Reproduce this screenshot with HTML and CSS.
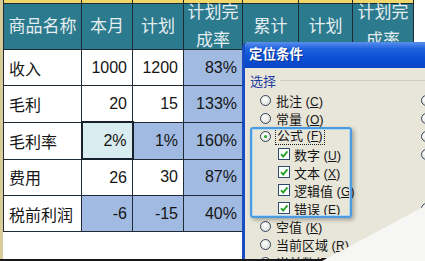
FILE: index.html
```html
<!DOCTYPE html>
<html lang="zh-CN">
<head>
    <meta charset="UTF-8">
    <meta name="viewport" content="width=device-width, initial-scale=1.0">
    <title>定位条件</title>
    <link rel="stylesheet" href="styles.css">
</head>
<body>
    <div class="sheet">
        <table class="grid">
            <colgroup>
                <col class="c-name">
                <col class="c-num">
                <col class="c-num">
                <col class="c-rate">
                <col class="c-sum">
                <col class="c-plan">
                <col class="c-rate2">
            </colgroup>
            <tr class="cap">
                <td></td><td></td><td></td><td></td><td></td><td></td><td></td>
            </tr>
            <tr class="head">
                <th><div class="hd">商品名称</div></th>
                <th><div class="hd">本月</div></th>
                <th><div class="hd">计划</div></th>
                <th><div class="hd two">计划完<br>成率</div></th>
                <th><div class="hd">累计</div></th>
                <th><div class="hd">计划</div></th>
                <th><div class="hd two">计划完<br>成率</div></th>
            </tr>
            <tr>
                <td>收入</td><td class="n">1000</td><td class="n">1200</td><td class="n hl">83%</td>
                <td class="n">5200</td><td class="n">6000</td><td class="n hl">87%</td>
            </tr>
            <tr>
                <td>毛利</td><td class="n">20</td><td class="n">15</td><td class="n hl">133%</td>
                <td class="n">104</td><td class="n">90</td><td class="n hl">116%</td>
            </tr>
            <tr>
                <td>毛利率</td><td class="n sel">2%</td><td class="n hl">1%</td><td class="n hl">160%</td>
                <td class="n hl">2%</td><td class="n hl">2%</td><td class="n hl">133%</td>
            </tr>
            <tr>
                <td>费用</td><td class="n">26</td><td class="n">30</td><td class="n hl">87%</td>
                <td class="n">130</td><td class="n">150</td><td class="n hl">87%</td>
            </tr>
            <tr>
                <td>税前利润</td><td class="n hl">-6</td><td class="n hl">-15</td><td class="n hl">40%</td>
                <td class="n hl">-26</td><td class="n hl">-60</td><td class="n hl">43%</td>
            </tr>
        </table>

        <div class="dialog">
            <div class="title">定位条件</div>
            <div class="group"><span>选择</span><i class="rule"></i></div>
            <div class="cols">
                <div class="col">
                    <label class="opt"><span class="radio"></span><span>批注 (<u>C</u>)</span></label>
                    <label class="opt"><span class="radio"></span><span>常量 (<u>O</u>)</span></label>
                    <label class="opt"><span class="radio on"></span><span class="focus">公式 (<u>F</u>)</span></label>
                    <label class="opt sub"><span class="check"><svg viewBox="0 0 10 10"><path d="M2 5.2 L4.2 7.6 L8.4 2.4"/></svg></span><span>数字 (<u>U</u>)</span></label>
                    <label class="opt sub"><span class="check"><svg viewBox="0 0 10 10"><path d="M2 5.2 L4.2 7.6 L8.4 2.4"/></svg></span><span>文本 (<u>X</u>)</span></label>
                    <label class="opt sub"><span class="check"><svg viewBox="0 0 10 10"><path d="M2 5.2 L4.2 7.6 L8.4 2.4"/></svg></span><span>逻辑值 (<u>G</u>)</span></label>
                    <label class="opt sub"><span class="check"><svg viewBox="0 0 10 10"><path d="M2 5.2 L4.2 7.6 L8.4 2.4"/></svg></span><span>错误 (<u>E</u>)</span></label>
                    <label class="opt"><span class="radio"></span><span>空值 (<u>K</u>)</span></label>
                    <label class="opt"><span class="radio"></span><span>当前区域 (<u>R</u>)</span></label>
                    <label class="opt"><span class="radio"></span><span>当前数组 (<u>A</u>)</span></label>
                </div>
                <div class="col">
                    <label class="opt"><span class="radio"></span><span>行内容差异单元格 (<u>W</u>)</span></label>
                    <label class="opt"><span class="radio"></span><span>列内容差异单元格 (<u>M</u>)</span></label>
                    <label class="opt"><span class="radio"></span><span>引用单元格 (<u>P</u>)</span></label>
                    <label class="opt"><span class="radio"></span><span>从属单元格 (<u>D</u>)</span></label>
                    <label class="opt sub"><span class="radio"></span><span>直属 (<u>I</u>)</span></label>
                    <label class="opt sub"><span class="radio"></span><span>所有级别 (<u>L</u>)</span></label>
                    <label class="opt"><span class="radio"></span><span>最后一个单元格 (<u>S</u>)</span></label>
                    <label class="opt"><span class="radio"></span><span>可见单元格 (<u>Y</u>)</span></label>
                    <label class="opt"><span class="radio"></span><span>条件格式 (<u>T</u>)</span></label>
                </div>
            </div>
            <div class="callout"></div>
        </div>

        <div class="edge"></div>
        <div class="curl"></div>
    </div>
</body>
</html>
```

FILE: styles.css
```css
body {
    margin: 0;
    width: 425px;
    height: 261px;
    overflow: hidden;
    background: #fff;
}
.sheet {
    position: relative;
    width: 425px;
    height: 261px;
    box-sizing: border-box;
    border-left: 3px solid #d8cd98;
    background: #fff;
}
.grid {
    border-collapse: collapse;
    table-layout: fixed;
    width: 410px;
    font: 16px "Liberation Sans", "Noto Sans CJK SC", sans-serif;
    color: #151515;
}
.c-name { width: 78px; }
.c-num { width: 51px; }
.c-rate { width: 59px; }
.c-sum { width: 56px; }
.c-plan { width: 54px; }
.c-rate2 { width: 61px; }
.grid td, .grid th {
    border: 1px solid #1e2a36;
    padding: 0 5px;
    height: 35px;
    white-space: nowrap;
    overflow: visible;
}
.grid .cap td {
    height: 3px;
    padding: 0;
    border-top: 0;
    background: #efd76a;
    font-size: 0;
    line-height: 0;
}
.grid .head th {
    height: 45px;
    padding: 0;
    background: #2c7a8e;
    color: #e4eef0;
    font-weight: normal;
    font-size: 17px;
}
.hd {
    height: 45px;
    display: flex;
    align-items: center;
    justify-content: center;
    text-align: center;
    line-height: 24px;
}
.hd.two {
    line-height: 28px;
}
.grid .n {
    text-align: right;
}
.grid .hl {
    background: #a0bae2;
}
.grid .sel {
    background: #d9ecef;
    border: 2px solid #17222e;
}

.dialog {
    position: absolute;
    left: 239px;
    top: 42px;
    bottom: 0;
    width: 200px;
    border-left: 3px solid #1b4dc2;
    border-top-left-radius: 6px;
    background: #e8e6d9;
    font: 13px "Liberation Sans", "Noto Sans CJK SC", sans-serif;
    color: #151515;
    overflow: hidden;
}
.title {
    height: 26px;
    line-height: 26px;
    padding-left: 4px;
    border-top-left-radius: 4px;
    background: linear-gradient(#5a90ec, #2163e0 25%, #0b50d6 60%, #0846c6);
    color: #fff;
    font-weight: bold;
    font-size: 13.5px;
    text-shadow: 1px 1px 0 #0b2f8c;
}
.group {
    display: flex;
    align-items: center;
    height: 21px;
    margin-top: 2px;
    padding-left: 5px;
    color: #1f3da0;
}
.group .rule {
    flex: 1;
    margin-left: 4px;
    border-top: 1px solid #cfcdbf;
}
.cols {
    display: flex;
}
.col {
    flex: none;
    width: 176px;
    padding-left: 15px;
    box-sizing: border-box;
}
.col + .col {
    padding-left: 0;
}
.opt {
    display: flex;
    align-items: center;
    gap: 5px;
    height: 18px;
    white-space: nowrap;
}
.opt.sub {
    padding-left: 18px;
    gap: 4px;
}
.opt u {
    font-size: 12px;
}
.radio {
    position: relative;
    flex: none;
    width: 11px;
    height: 11px;
    box-sizing: border-box;
    border: 1px solid #34445c;
    border-radius: 50%;
    background: radial-gradient(circle at 40% 35%, #fff, #d8d8cf);
}
.radio.on::after {
    content: "";
    position: absolute;
    left: 3px;
    top: 3px;
    width: 3px;
    height: 3px;
    border-radius: 50%;
    background: #2aa52a;
}
.check {
    flex: none;
    width: 12px;
    height: 12px;
    box-sizing: border-box;
    border: 1px solid #2c4a6e;
    background: #fff;
}
.check svg {
    display: block;
    width: 10px;
    height: 10px;
}
.check path {
    fill: none;
    stroke: #21a121;
    stroke-width: 1.8;
}
.focus {
    outline: 1px dotted #222;
    padding: 0 1px;
    line-height: 15px;
}
.callout {
    position: absolute;
    left: 5px;
    top: 85px;
    width: 102px;
    height: 91px;
    box-sizing: border-box;
    border: 2px solid #4a9be0;
    border-radius: 3px;
    box-shadow: inset 0 0 0 1px #b5d8f2, 2px 2px 4px rgba(0, 0, 0, 0.3);
}
.edge {
    position: absolute;
    left: -3px;
    right: 0;
    bottom: 0;
    height: 2px;
    background: #161616;
}
.curl {
    position: absolute;
    right: 0;
    bottom: 0;
    width: 103px;
    height: 55px;
    background: #f6f6f4;
    clip-path: polygon(100% 0, 0 100%, 100% 100%);
}
```
